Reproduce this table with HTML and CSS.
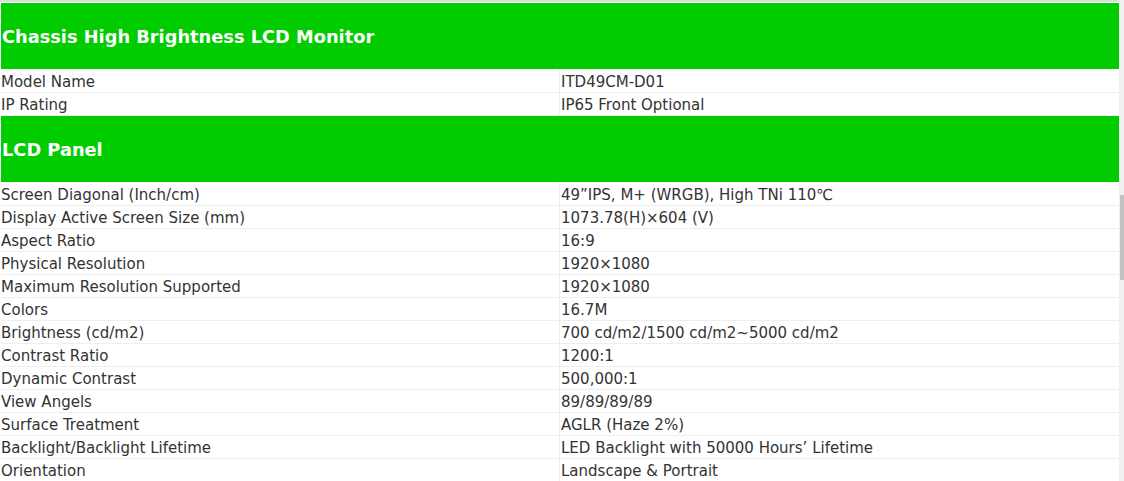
FILE: index.html
```html
<!DOCTYPE html>
<html>
<head>
<meta charset="utf-8">
<link rel="stylesheet" href="styles.css">
</head>
<body>
<div class="page">
  <div class="spec">
    <div class="head">Chassis High Brightness LCD Monitor</div>
    <div class="row"><div class="k">Model Name</div><div class="v">ITD49CM-D01</div></div>
    <div class="row"><div class="k">IP Rating</div><div class="v">IP65 Front Optional</div></div>
    <div class="head">LCD Panel</div>
    <div class="row"><div class="k">Screen Diagonal (Inch/cm)</div><div class="v">49”IPS, M+ (WRGB), High TNi 110℃</div></div>
    <div class="row"><div class="k">Display Active Screen Size (mm)</div><div class="v">1073.78(H)×604 (V)</div></div>
    <div class="row"><div class="k">Aspect Ratio</div><div class="v">16:9</div></div>
    <div class="row"><div class="k">Physical Resolution</div><div class="v">1920×1080</div></div>
    <div class="row"><div class="k">Maximum Resolution Supported</div><div class="v">1920×1080</div></div>
    <div class="row"><div class="k">Colors</div><div class="v">16.7M</div></div>
    <div class="row"><div class="k">Brightness (cd/m2)</div><div class="v">700 cd/m2/1500 cd/m2~5000 cd/m2</div></div>
    <div class="row"><div class="k">Contrast Ratio</div><div class="v">1200:1</div></div>
    <div class="row"><div class="k">Dynamic Contrast</div><div class="v">500,000:1</div></div>
    <div class="row"><div class="k">View Angels</div><div class="v">89/89/89/89</div></div>
    <div class="row"><div class="k">Surface Treatment</div><div class="v">AGLR (Haze 2%)</div></div>
    <div class="row"><div class="k">Backlight/Backlight Lifetime</div><div class="v">LED Backlight with 50000 Hours’ Lifetime</div></div>
    <div class="row"><div class="k">Orientation</div><div class="v">Landscape &amp; Portrait</div></div>
  </div>
  <div class="scrollbar"><div class="thumb"></div></div>
</div>
</body>
</html>
```
FILE: styles.css
```css
html, body {
  margin: 0;
  padding: 0;
  background: #fff;
  overflow: hidden;
}
.page {
  position: relative;
  height: 481px;
  border-top: 2px solid #dcdcdc;
  box-sizing: border-box;
  font-family: "DejaVu Sans", Verdana, sans-serif;
  color: #333;
}
.spec {
  margin: 1px 5px 0 1px;
}
.head {
  height: 66px;
  line-height: 68px;
  background: #00cc00;
  color: #fff;
  font-weight: bold;
  font-size: 17.8px;
  padding-left: 1px;
  white-space: nowrap;
}
.head + .row {
  padding-top: 1px;
}
.row {
  display: grid;
  grid-template-columns: 559px 1fr;
  height: 22px;
  border-bottom: 1px solid #eeeeee;
  font-size: 15px;
  line-height: 25px;
  white-space: nowrap;
  overflow: hidden;
}
.k {
  border-right: 1px solid #eeeeee;
  padding-left: 0;
}
.v {
  padding-left: 1px;
}
.scrollbar {
  position: absolute;
  top: -2px;
  right: 0;
  width: 5px;
  height: 481px;
  background: #f0f0f0;
}
.thumb {
  position: absolute;
  top: 195px;
  left: 1px;
  width: 4px;
  height: 85px;
  background: #c1c1c1;
}
```
